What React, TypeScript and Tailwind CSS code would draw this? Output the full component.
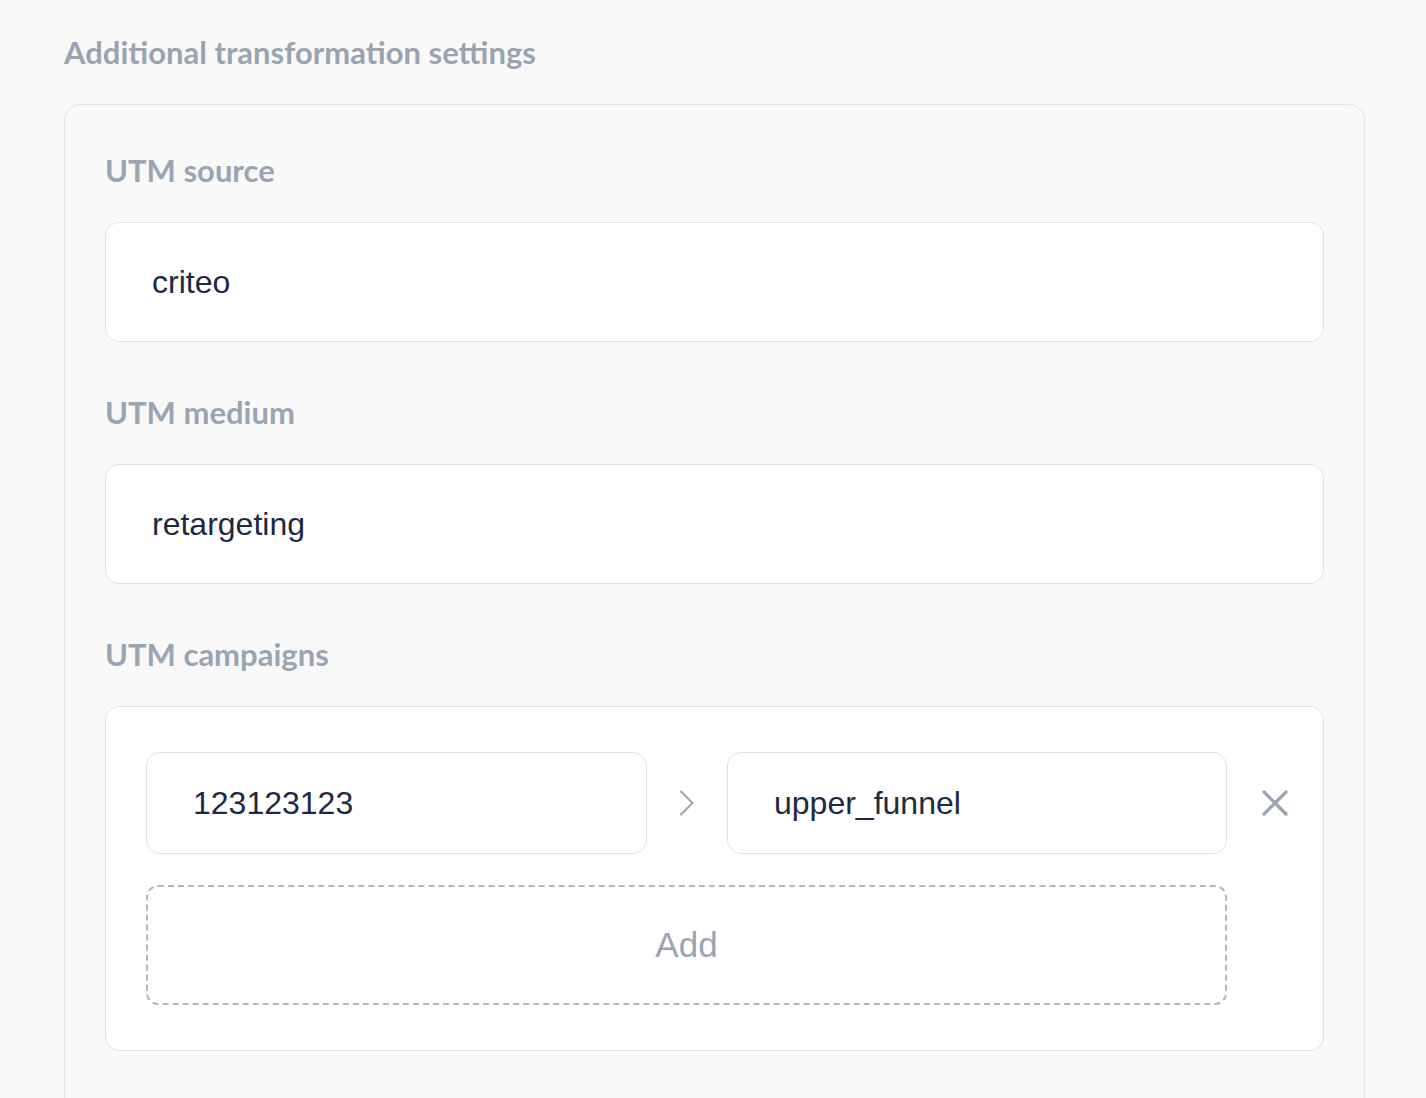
import React from 'react';

const labelFont = { fontFamily: 'Lato, "Open Sans", sans-serif' };
const inputFont = { fontFamily: '"Liberation Sans", Arial, sans-serif' };

const Label = ({ children }: { children: React.ReactNode }) => (
  <div className="text-[31px] leading-[36px] font-bold text-[#9aa5b3]" style={labelFont}>
    {children}
  </div>
);

const Field = ({ value, className = '' }: { value: string; className?: string }) => (
  <div
    className={`flex items-center bg-white border border-[#dfe3e8] rounded-[14px] pl-[46px] text-[32px] text-[#1e2943] ${className}`}
    style={inputFont}
  >
    {value}
  </div>
);

const App = () => {
  return (
    <div className="min-h-screen bg-[#f9f9f9] pl-16 pr-[61px] pt-8 overflow-hidden h-[1098px]">
      <h2 className="text-[31px] leading-[40px] font-bold text-[#9aa4b1]" style={labelFont}>
        Additional transformation settings
      </h2>

      <div className="mt-8 border border-[#e1e4e8] rounded-[16px] px-10 pt-[47px] pb-16">
        <Label>UTM source</Label>
        <Field value="criteo" className="mt-[34px] h-[120px]" />

        <div className="mt-[52px]">
          <Label>UTM medium</Label>
        </div>
        <Field value="retargeting" className="mt-[34px] h-[120px]" />

        <div className="mt-[52px]">
          <Label>UTM campaigns</Label>
        </div>
        <div className="mt-[34px] bg-white border border-[#dfe3e8] rounded-[14px] pl-10 pt-[45px] pb-[45px]">
          <div className="flex items-center h-[102px]">
            <Field value="123123123" className="w-[501px] h-full" />
            <div className="w-[80px] flex justify-center text-[#9aa4b2]">
              <svg width="16" height="26" viewBox="0 0 16 26" fill="none">
                <path d="M2 1.5 L13.5 13 L2 24.5" stroke="currentColor" strokeWidth="2" strokeLinecap="round" strokeLinejoin="round" />
              </svg>
            </div>
            <Field value="upper_funnel" className="w-[500px] h-full" />
            <div className="flex-1 flex justify-center text-[#9aa4b2]">
              <svg width="26" height="26" viewBox="0 0 26 26" fill="none">
                <path d="M2 2 L24 24 M24 2 L2 24" stroke="currentColor" strokeWidth="3.2" strokeLinecap="round" />
              </svg>
            </div>
          </div>
          <button
            className="mt-[31px] w-[1081px] h-[120px] border-2 border-dashed border-[#b0b8c2] rounded-[12px] flex items-center justify-center text-[35px] text-[#9ba4b1]"
            style={inputFont}
          >
            Add
          </button>
        </div>
      </div>
    </div>
  );
};

export default App;
